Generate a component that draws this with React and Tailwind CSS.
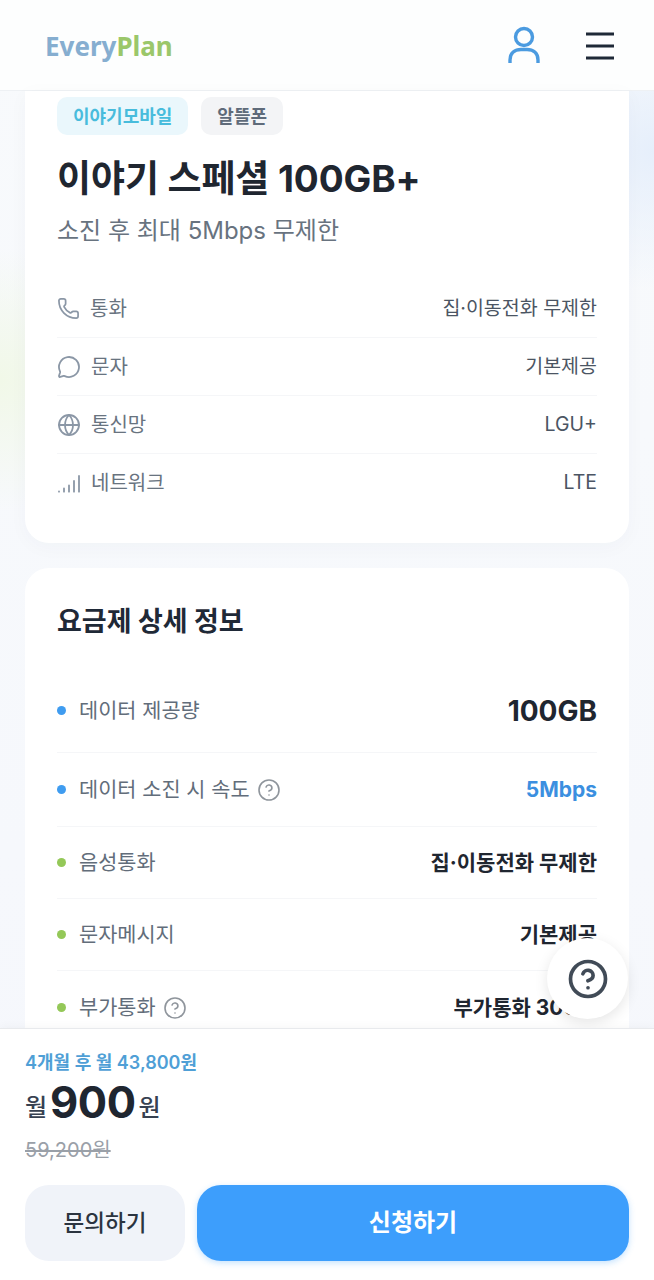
import React from "react";
import { Phone, MessageCircle, Globe, CircleHelp } from "lucide-react";

const FONT = "font-['Inter','Noto_Sans_CJK_KR','Noto_Sans',sans-serif]";

const SignalIcon = () => (
  <svg width="24" height="24" viewBox="0 0 24 24" fill="none" stroke="#8b97a6" strokeWidth="1.8" strokeLinecap="round">
    <path d="M2 20.5v.2M7 17.5v3.2M12 14.5v6.2M17 10v10.7M22 5v15.7" />
  </svg>
);

const UserIcon = () => (
  <svg width="32" height="38" viewBox="0 0 32 38" fill="none" stroke="#4b9be0" strokeWidth="3.4">
    <circle cx="16" cy="11" r="8.5" />
    <path d="M2 37v-3c0-7 5-10.500 11-10.500h6c6 0 11 3.500 11 10.500v3" />
  </svg>
);

const MenuIcon = () => (
  <svg width="28" height="28" viewBox="0 0 28 28" fill="none" stroke="#1f2937" strokeWidth="3.2" className="mt-[2px]">
    <path d="M0 2h28M0 14h28M0 26h28" />
  </svg>
);

const summaryRows = [
  { icon: <Phone size={23} strokeWidth={1.8} color="#8b97a6" />, label: "통화", value: "집·이동전화 무제한" },
  { icon: <MessageCircle size={24} strokeWidth={1.8} color="#8b97a6" />, label: "문자", value: "기본제공" },
  { icon: <Globe size={24} strokeWidth={1.8} color="#8b97a6" />, label: "통신망", value: "LGU+" },
  { icon: <SignalIcon />, label: "네트워크", value: "LTE" },
];

const Dot = ({ blue }) => (
  <span className={blue ? "h-[9px] w-[9px] rounded-full bg-[#3f9cf0]" : "h-[9px] w-[9px] rounded-full bg-[#94c858]"} />
);

const Help = () => <CircleHelp size={24} strokeWidth={1.6} color="#8f959c" />;

export default function App() {
  return (
    <div className={`${FONT} relative h-[1280px] w-[654px] overflow-hidden bg-[radial-gradient(circle_at_0px_380px,#f1f8e8_0,transparent_130px),radial-gradient(circle_at_654px_150px,#e6effb_0,transparent_140px),linear-gradient(#f8fafc,#f5f7fc)] text-[#1f2937]`}>
      {/* 상단 헤더 */}
      <header className="flex h-[91px] items-center justify-between border-b border-[#eef1f4] bg-[#fdfefe] pl-[45px] pr-[40px]">
        <div className="pt-[2px] font-['Noto_Sans',sans-serif] text-[26px] font-bold">
          <span className="text-[#86aed0]">Every</span>
          <span className="text-[#9bc76a]">Plan</span>
        </div>
        <div className="flex items-center gap-[46px]">
          <UserIcon />
          <MenuIcon />
        </div>
      </header>

      <main className="flex flex-col gap-[25px] px-[25px]">
        {/* 요금제 요약 */}
        <section className="rounded-b-[24px] bg-white px-[32px] pb-[31px] pt-[6px] shadow-[0_4px_20px_rgba(30,60,110,0.03)]">
          <div className="flex gap-[13px]">
            <span className="flex h-[38px] items-center rounded-[10px] bg-[#eaf7fc] px-[16px] text-[18px] font-bold text-[#48bcdc]">이야기모바일</span>
            <span className="flex h-[38px] items-center rounded-[10px] bg-[#f3f4f6] px-[16px] text-[18px] font-bold text-[#5f6b7a]">알뜰폰</span>
          </div>
          <h1 className="mt-[21px] text-[37px] font-bold leading-[46px] tracking-[-0.1px] text-[#1f2630]">이야기 스페셜 100GB+</h1>
          <p className="mt-[13px] text-[24px] leading-[32px] text-[#68737f]">소진 후 최대 5Mbps 무제한</p>
          <div className="mt-[33px] flex flex-col">
            {summaryRows.map((row, i) => (
              <div key={row.label} className={i < 3 ? "flex h-[58px] items-center justify-between border-b border-[#f5f6f8]" : "flex h-[58px] items-center justify-between"}>
                <div className="flex items-center gap-[10px] text-[20px] text-[#68737f]">
                  {row.icon}
                  <span>{row.label}</span>
                </div>
                <span className="text-[19.5px] text-[#4b5563]">{row.value}</span>
              </div>
            ))}
          </div>
        </section>

        {/* 요금제 상세 */}
        <section className="rounded-t-[24px] bg-white px-[32px] pt-[34px]">
          <h2 className="text-[27px] font-bold leading-[40px] text-[#1f2937]">요금제 상세 정보</h2>
          <div className="mt-[27px] flex flex-col">
            <div className="flex h-[84px] items-center justify-between border-b border-[#f5f6f8]">
              <div className="flex items-center gap-[13px] text-[20.800px] text-[#626d7a]"><Dot blue /><span>데이터 제공량</span></div>
              <span className="text-[28px] font-bold text-[#1f2630]">100GB</span>
            </div>
            <div className="flex h-[74px] items-center justify-between border-b border-[#f5f6f8]">
              <div className="flex items-center gap-[13px] text-[20.800px] text-[#626d7a]"><Dot blue /><span>데이터 소진 시 속도</span><span className="-ml-[6px] flex"><Help /></span></div>
              <span className="text-[21px] font-bold text-[#3b8fe0]">5Mbps</span>
            </div>
            <div className="flex h-[72px] items-center justify-between border-b border-[#f5f6f8]">
              <div className="flex items-center gap-[13px] text-[20.800px] text-[#626d7a]"><Dot /><span>음성통화</span></div>
              <span className="text-[21px] font-bold text-[#1f2630]">집·이동전화 무제한</span>
            </div>
            <div className="flex h-[72px] items-center justify-between border-b border-[#f5f6f8]">
              <div className="flex items-center gap-[13px] text-[20.800px] text-[#626d7a]"><Dot /><span>문자메시지</span></div>
              <span className="text-[21px] font-bold text-[#1f2630]">기본제공</span>
            </div>
            <div className="flex h-[73px] items-center justify-between">
              <div className="flex items-center gap-[13px] text-[20.800px] text-[#626d7a]"><Dot /><span>부가통화</span><span className="-ml-[6px] flex"><Help /></span></div>
              <span className="text-[21px] font-bold text-[#1f2630]">부가통화 300분</span>
            </div>
          </div>
        </section>
      </main>

      {/* 문의 플로팅 버튼 */}
      <button className="absolute left-[547px] top-[938px] flex h-[81px] w-[81px] items-center justify-center rounded-full bg-white shadow-[0_4px_14px_rgba(0,0,0,0.1)]">
        <CircleHelp size={42} strokeWidth={2.1} color="#414b57" />
      </button>

      {/* 하단 가격 바 */}
      <footer className="absolute bottom-0 left-0 h-[252px] w-full border-t border-[#e8eaed] bg-white px-[25px] pt-[22px] shadow-[0_-2px_8px_rgba(0,0,0,0.03)]">
        <p className="text-[18px] font-semibold leading-[24px] text-[#4f9fd6]">4개월 후 월 43,800원</p>
        <div className="mt-[1px] flex h-[52px] items-center gap-[3px]">
          <span className="pt-[12px] text-[24px] font-medium text-[#374151]">월</span>
          <span className="text-[43.500px] font-bold leading-[52px] tracking-[-0.5px] text-[#1f2630]">900</span>
          <span className="pt-[12px] text-[24px] font-medium text-[#374151]">원</span>
        </div>
        <p className="mt-[8px] text-[20px] leading-[28px] text-[#9aa0a8] line-through">59,200원</p>
        <div className="mt-[21px] flex gap-[12px]">
          <button className="h-[76px] w-[160px] rounded-[24px] bg-[#f0f3f9] text-[22.500px] font-medium text-[#2b3440]">문의하기</button>
          <button className="h-[76px] flex-1 rounded-[24px] bg-[#3d9efc] text-[24px] font-bold text-white shadow-[0_2px_6px_rgba(61,158,252,0.3)]">신청하기</button>
        </div>
      </footer>
    </div>
  );
}
